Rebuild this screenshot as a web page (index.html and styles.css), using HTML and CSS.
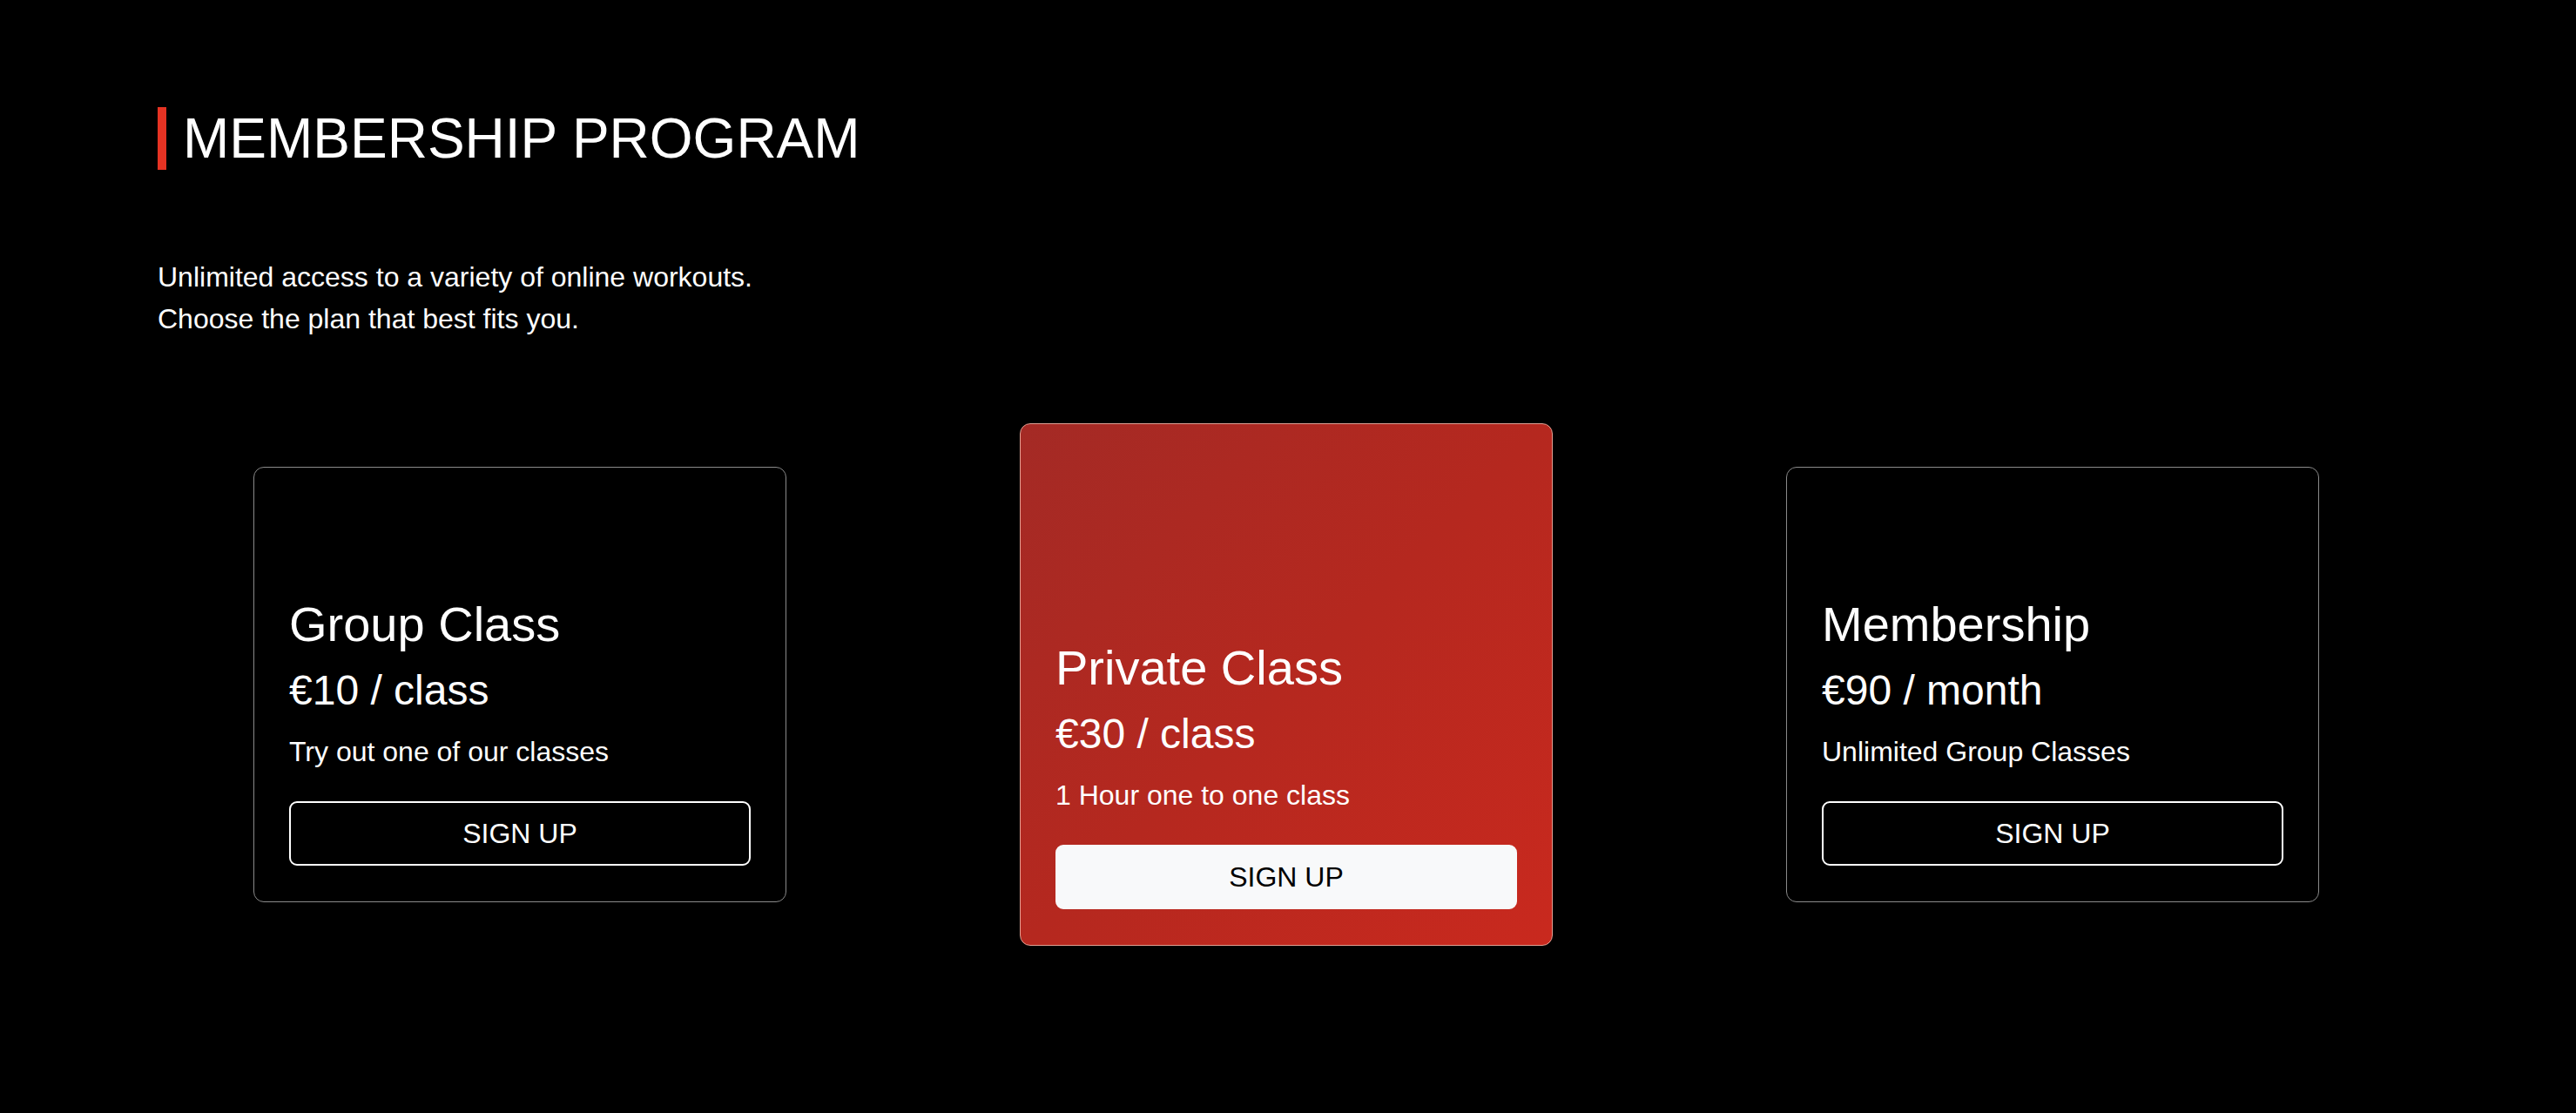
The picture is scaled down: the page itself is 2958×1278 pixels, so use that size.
FILE: index.html
```html
<!DOCTYPE html>
<html lang="en">
<head>
<meta charset="utf-8">
<title>Membership Program</title>
<link rel="stylesheet" href="styles.css">
</head>
<body>
<section class="membership">
  <h1 class="title">MEMBERSHIP PROGRAM</h1>
  <p class="intro">Unlimited access to a variety of online workouts.<br>Choose the plan that best fits you.</p>
  <div class="plans">
    <div class="plan">
      <h2 class="plan-name">Group Class</h2>
      <h3 class="plan-price">€10 / class</h3>
      <p class="plan-desc">Try out one of our classes</p>
      <button class="btn btn-outline">SIGN UP</button>
    </div>
    <div class="plan plan-featured">
      <h2 class="plan-name">Private Class</h2>
      <h3 class="plan-price">€30 / class</h3>
      <p class="plan-desc">1 Hour one to one class</p>
      <button class="btn btn-light">SIGN UP</button>
    </div>
    <div class="plan">
      <h2 class="plan-name">Membership</h2>
      <h3 class="plan-price">€90 / month</h3>
      <p class="plan-desc">Unlimited Group Classes</p>
      <button class="btn btn-outline">SIGN UP</button>
    </div>
  </div>
</section>
</body>
</html>
```

FILE: styles.css
```css
* {
  box-sizing: border-box;
}

html, body {
  margin: 0;
  background: #000;
  color: #fff;
  font-family: "Liberation Sans", Arial, Helvetica, sans-serif;
}

.membership {
  padding: 123px 185px 100px 181px;
  min-height: 1278px;
}

.title {
  margin: 0;
  font-size: 64px;
  font-weight: 400;
  line-height: 72px;
  border-left: 10px solid #e63323;
  padding-left: 19px;
}

.intro {
  margin: 99px 0 0;
  font-size: 32px;
  line-height: 48px;
}

.plans {
  margin-top: 96px;
  display: flex;
  justify-content: center;
  align-items: center;
  gap: 268px;
}

.plan {
  width: 612px;
  border: 1px solid #8a8a8a;
  border-radius: 12px;
  padding: 148px 40px 41px;
  display: flex;
  flex-direction: column;
}

.plan-featured {
  padding-top: 248px;
  border-color: #e3a093;
  background: linear-gradient(135deg, #a42a25 0%, #b5281f 50%, #c9291e 100%);
}

.plan-name {
  margin: 0 0 16px;
  font-size: 56px;
  font-weight: 400;
  line-height: 64px;
}

.plan-price {
  margin: 0 0 18px;
  font-size: 48px;
  font-weight: 400;
  line-height: 56px;
}

.plan-desc {
  margin: 0 0 33px;
  font-size: 32px;
  line-height: 48px;
}

.btn {
  display: block;
  width: 100%;
  font-family: inherit;
  font-size: 32px;
  line-height: 48px;
  padding: 11px 0;
  border-radius: 9px;
  cursor: pointer;
}

.btn-outline {
  background: #000;
  color: #fff;
  border: 2px solid #fff;
}

.btn-light {
  background: #f8f9fa;
  color: #000;
  border: 2px solid #f8f9fa;
}
```
